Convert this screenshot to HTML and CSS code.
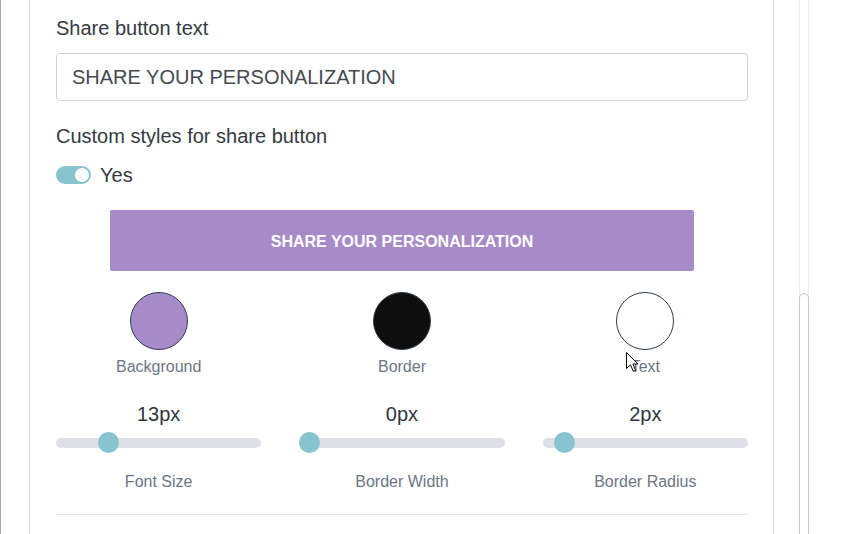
FILE: index.html
```html
<!DOCTYPE html>
<html>
<head>
<meta charset="utf-8">
<link rel="stylesheet" href="styles.css">
</head>
<body>
<div class="page">
  <div class="edge"></div>
  <div class="panel">
    <div class="field-label">Share button text</div>
    <div class="text-input">SHARE YOUR PERSONALIZATION</div>
    <div class="field-label custom">Custom styles for share button</div>
    <div class="toggle-row">
      <span class="toggle"><span class="knob"></span></span>
      <span class="toggle-text">Yes</span>
    </div>
    <div class="preview-btn">SHARE YOUR PERSONALIZATION</div>
    <div class="swatches">
      <div class="swatch-col">
        <span class="swatch swatch-bg"></span>
        <span class="small-label">Background</span>
      </div>
      <div class="swatch-col">
        <span class="swatch swatch-border"></span>
        <span class="small-label">Border</span>
      </div>
      <div class="swatch-col">
        <span class="swatch swatch-text"></span>
        <span class="small-label">Text</span>
      </div>
    </div>
    <div class="sliders">
      <div class="slider-col">
        <span class="value">13px</span>
        <div class="slider"><span class="track"></span><span class="thumb" style="left: calc((100% - 21px) * 0.227)"></span></div>
        <span class="small-label">Font Size</span>
      </div>
      <div class="slider-col">
        <span class="value">0px</span>
        <div class="slider"><span class="track"></span><span class="thumb" style="left: 0"></span></div>
        <span class="small-label">Border Width</span>
      </div>
      <div class="slider-col">
        <span class="value">2px</span>
        <div class="slider"><span class="track"></span><span class="thumb" style="left: calc((100% - 21px) * 0.064)"></span></div>
        <span class="small-label">Border Radius</span>
      </div>
    </div>
    <div class="divider"></div>
  </div>
  <div class="scrollbar"><div class="scroll-thumb"></div></div>
</div>
<svg class="cursor" width="14" height="22" viewBox="0 0 14 22">
  <path d="M0.5 0.5 L0.5 16.5 L4.5 12.8 L7.3 19.3 L9.6 18.3 L6.9 12 L12 12 Z" fill="#fff" stroke="#000" stroke-width="1" stroke-linejoin="miter"/>
</svg>
</body>
</html>
```

FILE: styles.css
```css
html, body {
  margin: 0;
  padding: 0;
  background: #ffffff;
  width: 853px;
  height: 534px;
  overflow: hidden;
  font-family: "Liberation Sans", Arial, sans-serif;
  color: #333a44;
}

.page {
  display: flex;
  height: 534px;
  position: relative;
}

.edge {
  width: 1px;
  background: #a8a8a8;
  flex: none;
}

.panel {
  flex: none;
  margin-left: 28px;
  width: 692px;
  padding: 16px 25px 0 26px;
  border-left: 1px solid #dcdcdc;
  border-right: 1px solid #dcdcdc;
  display: flex;
  flex-direction: column;
}

.field-label {
  font-size: 20px;
  line-height: 24px;
  color: #333a44;
}

.field-label.custom {
  margin-top: 23px;
}

.text-input {
  margin-top: 13px;
  height: 46px;
  border: 1px solid #ccd2da;
  border-radius: 4px;
  padding: 0 15px;
  display: flex;
  align-items: center;
  font-size: 20px;
  color: #444a53;
}

.toggle-row {
  margin-top: 15px;
  display: flex;
  align-items: center;
  gap: 9px;
  height: 24px;
}

.toggle {
  width: 35px;
  height: 18px;
  border-radius: 9px;
  background: #88c3d0;
  display: flex;
  align-items: center;
  justify-content: flex-end;
  padding-right: 2px;
  box-sizing: border-box;
}

.knob {
  width: 14px;
  height: 14px;
  border-radius: 50%;
  background: #ffffff;
}

.toggle-text {
  font-size: 20px;
  line-height: 24px;
  color: #333a44;
}

.preview-btn {
  margin: 23px 54px 0;
  height: 61px;
  box-sizing: border-box;
  padding-top: 2px;
  background: #a78bc8;
  border-radius: 2px;
  display: flex;
  align-items: center;
  justify-content: center;
  color: #ffffff;
  font-weight: bold;
  font-size: 16px;
}

.swatches,
.sliders {
  display: grid;
  grid-template-columns: 1fr 1fr 1fr;
  column-gap: 38px;
}

.swatches {
  margin-top: 21px;
}

.swatch-col,
.slider-col {
  display: flex;
  flex-direction: column;
  align-items: center;
}

.swatch {
  width: 56px;
  height: 56px;
  border-radius: 50%;
  border: 1px solid #2f3d4e;
}

.swatch-bg { background: #a78bc8; }
.swatch-border { background: #0e0e0e; }
.swatch-text { background: #ffffff; }

.small-label {
  font-size: 16px;
  line-height: 20px;
  color: #6b7685;
}

.swatch-col .small-label {
  margin-top: 7px;
}

.sliders {
  margin-top: 25px;
}

.value {
  font-size: 20px;
  line-height: 24px;
  color: #2e3641;
}

.slider {
  position: relative;
  align-self: stretch;
  height: 21px;
  margin-top: 6px;
  display: flex;
  align-items: center;
}

.track {
  flex: 1;
  height: 10px;
  border-radius: 5px;
  background: #dde1e5;
}

.thumb {
  position: absolute;
  top: 0;
  width: 21px;
  height: 21px;
  border-radius: 50%;
  background: #88c3d0;
}

.slider-col .small-label {
  margin-top: 19px;
}

.divider {
  margin-top: 22px;
  height: 1px;
  background: #e6e6e6;
}

.scrollbar {
  flex: none;
  margin-left: 25px;
  width: 8px;
  border-left: 1px solid #ececec;
  border-right: 1px solid #ececec;
  display: flex;
  flex-direction: column;
}

.scroll-thumb {
  margin: 293px -1px 0;
  flex: 1;
  border: 1px solid #c4c4c4;
  border-bottom: none;
  border-radius: 5px 5px 0 0;
}

.cursor {
  position: absolute;
  left: 626px;
  top: 352px;
}
```
